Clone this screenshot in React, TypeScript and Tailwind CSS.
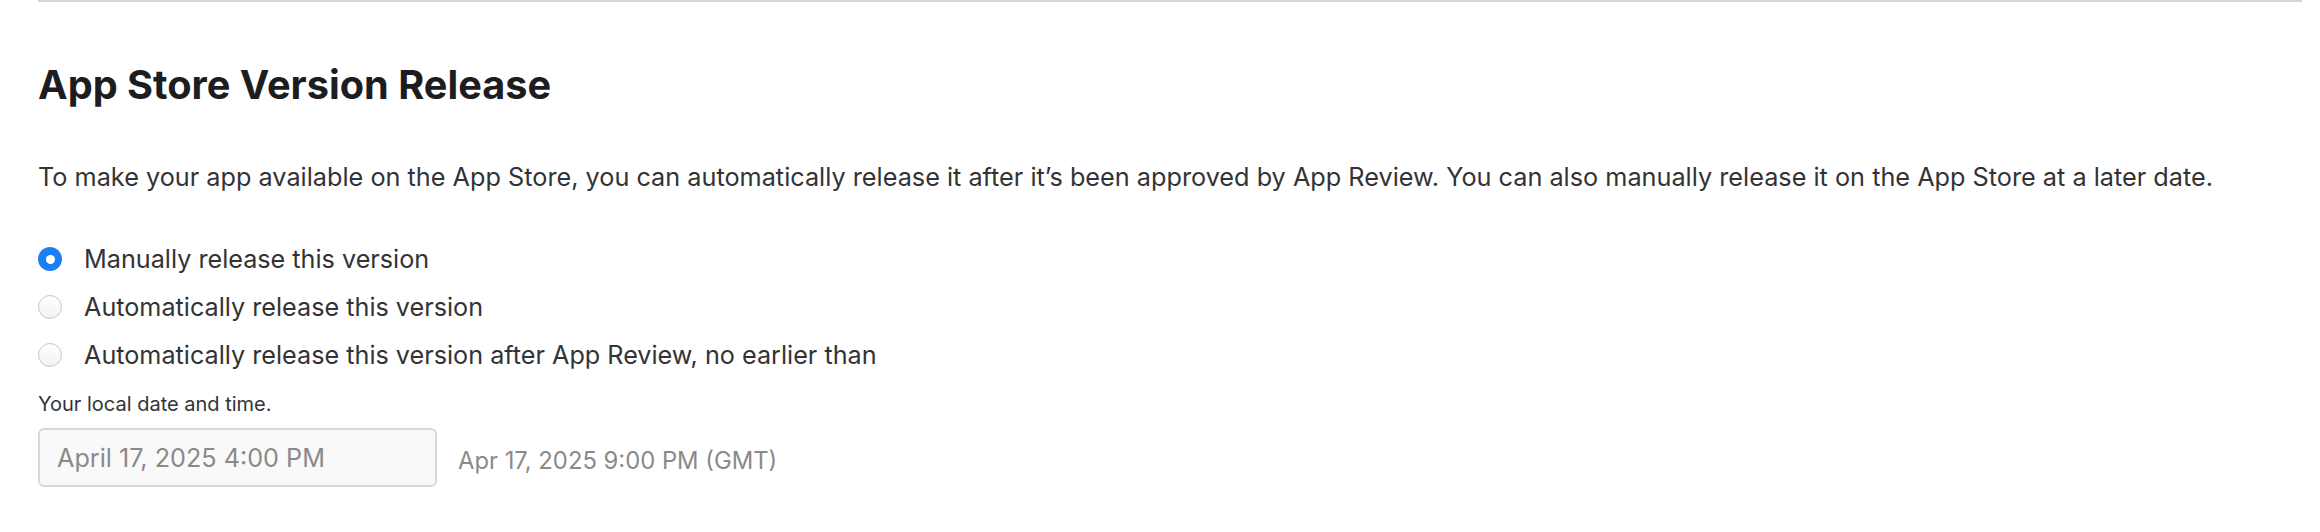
import { useState } from 'react';

const options = [
  'Manually release this version',
  'Automatically release this version',
  'Automatically release this version after App Review, no earlier than',
];

function Radio({ checked }: { checked: boolean }) {
  if (checked) {
    return (
      <span className="flex h-[24px] w-[24px] items-center justify-center rounded-full bg-[#1a7ff5]">
        <span className="h-[9px] w-[9px] rounded-full bg-white" />
      </span>
    );
  }
  return (
    <span className="h-[24px] w-[24px] rounded-full border-[1.5px] border-[#c6c6c6] bg-gradient-to-b from-white to-[#f2f2f2]" />
  );
}

export default function App() {
  const [selected, setSelected] = useState(0);

  return (
    <div
      className="min-h-[532px] w-full bg-white pl-[38px] pr-[18px]"
      style={{ fontFamily: 'Inter, "Noto Sans", sans-serif' }}
    >
      <div className="border-t-2 border-[#d6d6d6]" />

      <h2 className="mt-[60px] text-[39.7px] font-bold leading-[46px] text-[#1d1d1f]">
        App Store Version Release
      </h2>

      <p className="mt-[53px] text-[25.25px] leading-[32px] text-[#333336]">
        To make your app available on the App Store, you can automatically release it after it’s been approved by App Review. You can also manually release it on the App Store at a later date.
      </p>

      <div className="mt-[42px]">
        {options.map((label, i) => (
          <label
            key={label}
            className="flex h-[48px] cursor-pointer items-center"
            onClick={() => setSelected(i)}
          >
            <Radio checked={selected === i} />
            <span className="ml-[22px] text-[25.2px] leading-[32px] text-[#333336]">
              {label}
            </span>
          </label>
        ))}
      </div>

      <p className="mt-[13px] text-[20px] leading-[24px] text-[#333336]">
        Your local date and time.
      </p>

      <div className="mt-[12px] flex items-center">
        <div className="flex h-[59px] w-[399px] items-center rounded-[6px] border-2 border-[#d8d8d8] bg-[#f9f9f9] px-[17px] pt-[2px]">
          <span className="text-[25.2px] text-[#8a8a8a]">April 17, 2025 4:00 PM</span>
        </div>
        <span className="ml-[21px] pt-[6px] text-[23.8px] text-[#8a8a8a]">
          Apr 17, 2025 9:00 PM (GMT)
        </span>
      </div>
    </div>
  );
}
